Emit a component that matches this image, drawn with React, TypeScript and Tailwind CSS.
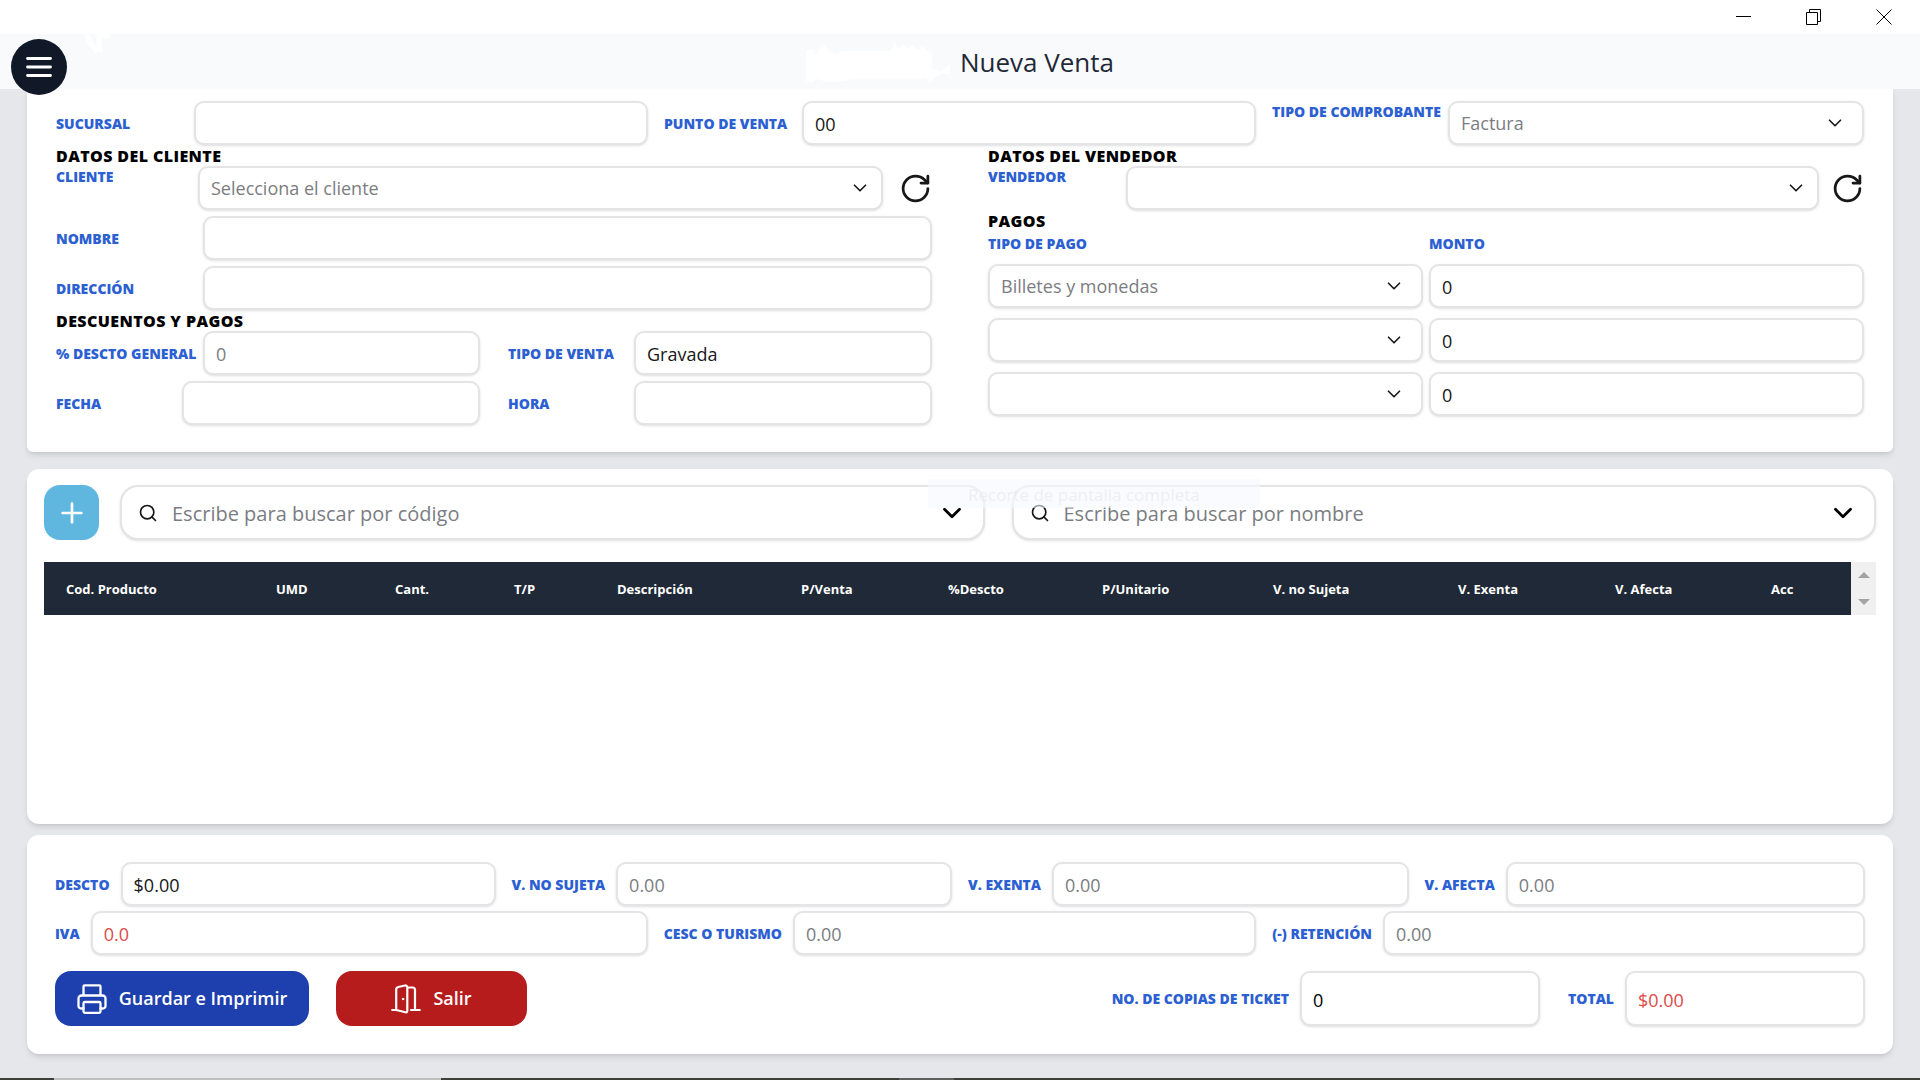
import clsx from 'clsx';
import { ChevronDown, Plus, RotateCw, Search } from 'lucide-react';
import React, { useState } from 'react';

type FieldProps = {
    id: string;
    label: string;
    labelClass?: string;
    textClass?: string;
    defaultValue?: string;
    placeholder?: string;
};

const control = 'w-full min-w-0 rounded-[10px] border-2 border-[#e4e4e7] bg-white px-[11px] text-[18px] shadow-sm outline-none placeholder:text-[#7b7d82] focus:border-blue-400';
const labelText = 'shrink-0 text-[14px] leading-[21px] font-extrabold text-[#2c5fd2]';

const Field: React.FC<FieldProps> = ({ id, label, labelClass, textClass = 'text-neutral-900', defaultValue, placeholder }) => (
    <div className="flex items-center">
        <label htmlFor={id} className={clsx(labelText, labelClass)}>{label}</label>
        <input id={id} defaultValue={defaultValue} placeholder={placeholder} className={clsx(control, 'h-11 pt-0.5', textClass)} />
    </div>
);

type PickerProps = {
    id: string;
    value?: string;
    arrowClass?: string;
    ariaLabel?: string;
};

const Picker: React.FC<PickerProps> = ({ id, value = '', arrowClass = 'right-[18px]', ariaLabel }) => (
    <div className="relative min-w-0 flex-1">
        <select id={id} aria-label={ariaLabel} className={clsx(control, 'h-11 appearance-none text-[#7b7d82]')}>
            <option>{value}</option>
        </select>
        <ChevronDown strokeWidth={1.8} className={clsx('pointer-events-none absolute top-[11px] size-[22px] text-neutral-900', arrowClass)} />
    </div>
);

const SectionTitle: React.FC<{ children: React.ReactNode }> = ({ children }) => (
    <h2 className="h-[21px] text-[16px] leading-[22px] font-extrabold tracking-wide text-black">{children}</h2>
);

const ReloadButton: React.FC<{ title: string }> = ({ title }) => (
    <button type="button" aria-label={title} className="shrink-0">
        <RotateCw className="size-[33px] text-neutral-900" />
    </button>
);

const SearchBox: React.FC<{ label: string }> = ({ label }) => (
    <div className="flex h-[55px] min-w-0 flex-1 items-center rounded-[18px] border-2 border-[#e4e4e7] bg-white px-4 shadow-sm">
        <Search className="size-5 shrink-0 text-neutral-900" />
        <input aria-label={label} placeholder={label} className="ml-3.5 min-w-0 flex-1 pt-0.5 text-[20px] outline-none placeholder:text-[#7b7d82]" />
        <button type="button" aria-label="Mostrar opciones">
            <ChevronDown className="size-[30px] text-black" strokeWidth={2.2} />
        </button>
    </div>
);

const WindowBar = () => (
    <div className="flex h-[34px] items-center justify-end gap-[54px] bg-white pr-[28px]">
        <button type="button" aria-label="Minimizar">
            <svg className="size-4" viewBox="0 0 16 16" stroke="#000" fill="none"><path d="M0 7.5h15" /></svg>
        </button>
        <button type="button" aria-label="Restaurar">
            <svg className="size-4" viewBox="0 0 16 16" stroke="#000" fill="none"><path d="M.5 3.5h11v12H.5zM3.5 3.500v-3h11v12h-3" /></svg>
        </button>
        <button type="button" aria-label="Cerrar">
            <svg className="size-4" viewBox="0 0 16 16" stroke="#000" fill="none"><path d="M.5.5l15 15M15.500.5l-15 15" /></svg>
        </button>
    </div>
);

const Header = () => (
    <header className="relative flex h-[55px] items-center justify-center bg-[#f9fafc]">
        <button type="button" aria-label="Menú" className="absolute top-[5px] left-[11px] z-10 flex size-14 items-center justify-center rounded-full bg-[#111827]">
            <svg className="h-[22px] w-7" viewBox="0 0 28 22" stroke="#fff" strokeWidth="2.8" strokeLinecap="round"><path d="M2.500 2.500h23M2.500 11h23M2.500 19.500h23" /></svg>
        </button>
        <svg className="absolute top-0 left-[82px] h-5 w-7" viewBox="0 0 28 20" fill="none" stroke="#fff" strokeWidth="5"><path d="M4 0l5 10 7 8M19 18l-2-9V2h12" /></svg>
        <svg className="h-10 w-[150px]" viewBox="0 0 150 40" fill="#fff">
            <path d="M0 8l6-1 3 6 4-5 6-5 3 6 8 3 6-3h48l5-7 4 4 5-4 3 5 6-4 4 5 6-4 4 5 5 1v16l8 4 6-5 4-3v11l-6-2-6 3-8 6-4-5-6 2H50l-22 3-5 7-5-8-7-2-5 4-6-2z" />
        </svg>
        <h1 className="ml-1 text-[26px] leading-8 font-medium text-[#1f2937]">Nueva Venta</h1>
    </header>
);

const pagos = ['Billetes y monedas', '', ''];

const DatosVenta = () => (
    <section className="rounded-b-md bg-white px-[29px] pt-3 pb-[27px] shadow-md">
        <div className="grid grid-cols-3 gap-4">
            <Field id="sucursal" label="SUCURSAL" labelClass="w-[138px]" />
            <Field id="punto" label="PUNTO DE VENTA" labelClass="w-[138px]" defaultValue="00" />
            <div className="flex items-start">
                <label htmlFor="comprobante" className={clsx(labelText, 'w-[176px]')}>TIPO DE COMPROBANTE</label>
                <Picker id="comprobante" value="Factura" />
            </div>
        </div>

        <div className="grid grid-cols-2 gap-14">
            <div>
                <SectionTitle>DATOS DEL CLIENTE</SectionTitle>
                <div className="flex flex-col gap-1.5">
                    <div className="flex items-start">
                        <label htmlFor="cliente" className={clsx(labelText, 'w-[142px]')}>CLIENTE</label>
                        <Picker id="cliente" value="Selecciona el cliente" arrowClass="right-[12px]" />
                        <div className="flex h-11 items-center pl-4"><ReloadButton title="Recargar clientes" /></div>
                    </div>
                    <Field id="nombre" label="NOMBRE" labelClass="w-[147px]" />
                    <Field id="direccion" label="DIRECCIÓN" labelClass="w-[147px]" />
                </div>
                <SectionTitle>DESCUENTOS Y PAGOS</SectionTitle>
                <div className="grid grid-cols-2 gap-x-7 gap-y-1.5">
                    <Field id="descto-general" label="% DESCTO GENERAL" labelClass="w-[147px]" placeholder="0" />
                    <Field id="tipo-venta" label="TIPO DE VENTA" labelClass="w-[126px]" defaultValue="Gravada" />
                    <Field id="fecha" label="FECHA" labelClass="w-[126px]" />
                    <Field id="hora" label="HORA" labelClass="w-[126px]" />
                </div>
            </div>

            <div>
                <SectionTitle>DATOS DEL VENDEDOR</SectionTitle>
                <div className="flex items-start">
                    <label htmlFor="vendedor" className={clsx(labelText, 'w-[138px]')}>VENDEDOR</label>
                    <Picker id="vendedor" arrowClass="right-[12px]" />
                    <div className="flex h-11 items-center pl-3"><ReloadButton title="Recargar vendedores" /></div>
                </div>
                <SectionTitle>PAGOS</SectionTitle>
                <div className="grid grid-cols-2 gap-x-1.5 gap-y-2.5">
                    <label htmlFor="pago-0" className={clsx(labelText, 'pt-0.5')}>TIPO DE PAGO</label>
                    <label htmlFor="monto-0" className={clsx(labelText, 'pt-0.5')}>MONTO</label>
                    {pagos.map((p, i) => (
                        <React.Fragment key={i}>
                            <Picker id={`pago-${i}`} value={p} ariaLabel={`Tipo de pago ${i + 1}`} />
                            <input id={`monto-${i}`} aria-label={`Monto ${i + 1}`} defaultValue="0" className={clsx(control, 'h-11 pt-0.5 text-neutral-900')} />
                        </React.Fragment>
                    ))}
                </div>
            </div>
        </div>
    </section>
);

const columnas = [
    { titulo: 'Cod. Producto', ancho: 'w-[210px]' },
    { titulo: 'UMD', ancho: 'w-[119px]' },
    { titulo: 'Cant.', ancho: 'w-[119px]' },
    { titulo: 'T/P', ancho: 'w-[103px]' },
    { titulo: 'Descripción', ancho: 'w-[184px]' },
    { titulo: 'P/Venta', ancho: 'w-[147px]' },
    { titulo: '%Descto', ancho: 'w-[154px]' },
    { titulo: 'P/Unitario', ancho: 'w-[171px]' },
    { titulo: 'V. no Sujeta', ancho: 'w-[185px]' },
    { titulo: 'V. Exenta', ancho: 'w-[157px]' },
    { titulo: 'V. Afecta', ancho: 'w-[156px]' },
    { titulo: 'Acc', ancho: 'w-[102px]' },
];

const Productos = () => (
    <section className="relative flex-1 rounded-xl bg-white px-[17px] pt-4 pb-4 shadow-md">
        <div className="flex items-center">
            <button type="button" aria-label="Agregar producto" className="mr-[21px] flex size-[55px] shrink-0 items-center justify-center rounded-[16px] bg-[#5fb7e0] text-white">
                <Plus className="size-8" />
            </button>
            <div className="flex min-w-0 flex-1 gap-[27px]">
                <SearchBox label="Escribe para buscar por código" />
                <SearchBox label="Escribe para buscar por nombre" />
            </div>
        </div>
        {/* Aviso que se desvanece */}
        <div className="pointer-events-none absolute top-2.5 left-[901px] h-[29px] w-[332px] bg-[#f7f9fd]/60 pl-10 text-[17px] leading-8 text-[#e9eaee]/70">
            Recorte de pantalla completa
        </div>
        <div className="mt-[22px] flex">
            <table className="w-full table-fixed bg-[#1f2937] text-white">
                <thead>
                    <tr className="h-[53px]">
                        {columnas.map((c) => (
                            <th key={c.titulo} className={clsx('pt-0.5 pl-[22px] text-left text-[13px] font-bold whitespace-nowrap', c.ancho)}>{c.titulo}</th>
                        ))}
                    </tr>
                </thead>
            </table>
            <div className="flex w-[25px] shrink-0 flex-col items-center justify-between bg-[#f0f0f0] py-[10px]">
                <svg className="h-1.5 w-3" viewBox="0 0 12 6" fill="#a3a3a3"><path d="M0 6l6-6 6 6z" /></svg>
                <svg className="h-1.5 w-3" viewBox="0 0 12 6" fill="#a3a3a3"><path d="M0 0l6 6 6-6z" /></svg>
            </div>
        </div>
    </section>
);

const Totales = () => {
    const [copias, setCopias] = useState('0');

    return (
        <section className="rounded-xl bg-white px-7 pt-[27px] pb-7 shadow-md">
            <div className="grid grid-cols-4 gap-4">
                <Field id="descto" label="DESCTO" labelClass="pr-[11px]" defaultValue="$0.00" />
                <Field id="no-sujeta" label="V. NO SUJETA" labelClass="pr-[11px]" placeholder="0.00" />
                <Field id="exenta" label="V. EXENTA" labelClass="pr-[11px]" placeholder="0.00" />
                <Field id="afecta" label="V. AFECTA" labelClass="pr-[11px]" placeholder="0.00" />
            </div>
            <div className="mt-[5px] grid grid-cols-3 gap-4">
                <Field id="iva" label="IVA" labelClass="pr-[11px]" textClass="font-medium text-[#dc4a4a]" defaultValue="0.0" />
                <Field id="cesc" label="CESC O TURISMO" labelClass="pr-[11px]" placeholder="0.00" />
                <Field id="retencion" label="(-) RETENCIÓN" labelClass="pr-[11px]" placeholder="0.00" />
            </div>
            <div className="mt-4 flex items-center justify-between text-[18px]">
                <div className="flex gap-[27px] font-semibold text-white">
                    <button type="button" className="flex h-[55px] w-[254px] items-center justify-center gap-3 rounded-[16px] bg-[#1e3fae]">
                        <svg className="size-[30px]" viewBox="0 0 30 30" fill="none" stroke="currentColor" strokeWidth="2.3" strokeLinecap="round" strokeLinejoin="round">
                            <path d="M6.500 24.500H4a2.500 2.500 0 0 1-2.500-2.500v-7.500A3 3 0 0 1 4.500 11.500h21a3 3 0 0 1 3 3V22a2.500 2.500 0 0 1-2.500 2.500h-2.500M6.500 11.500v-9a1.200 1.200 0 0 1 1.200-1.200h14.600a1.200 1.200 0 0 1 1.200 1.200v9" />
                            <rect x="6.500" y="18" width="17" height="10.800" rx="1.300" />
                        </svg>
                        Guardar e Imprimir
                    </button>
                    <button type="button" className="flex h-[55px] w-[191px] items-center justify-center gap-3 rounded-[16px] bg-[#b71c1c]">
                        <svg className="size-[30px]" viewBox="0 0 30 30" fill="none" stroke="currentColor" strokeWidth="2.2" strokeLinecap="round" strokeLinejoin="round">
                            <path d="M1.200 26h4V5.500A2.500 2.500 0 0 1 7.300 3l6.500-1.500A2 2 0 0 1 16.300 3.400v23.400a1.500 1.500 0 0 1-1.900 1.500L5.200 26M16.300 3.500h5.200A2.500 2.500 0 0 1 24 6v20M20 26h8.800" />
                            <circle cx="12" cy="15" r=".8" fill="currentColor" strokeWidth="1" />
                        </svg>
                        Salir
                    </button>
                </div>
                <div className="flex items-center">
                    <label htmlFor="copias" className={clsx(labelText, 'pr-[11px]')}>NO. DE COPIAS DE TICKET</label>
                    <div className="w-60">
                        <input id="copias" value={copias} onChange={(e) => setCopias(e.target.value)} className={clsx(control, 'h-[55px] pt-0.5 font-medium text-black')} />
                    </div>
                    <label htmlFor="total" className={clsx(labelText, 'pr-[11px] pl-7')}>TOTAL</label>
                    <div className="w-60">
                        <input id="total" defaultValue="$0.00" className={clsx(control, 'h-[55px] pt-0.5 font-medium text-[#dc4a4a]')} />
                    </div>
                </div>
            </div>
        </section>
    );
};

const App: React.FC = () => (
    <div className="flex min-h-screen flex-col bg-[#e5e7eb] font-['Open_Sans','Noto_Sans',sans-serif]">
        <WindowBar />
        <Header />
        <main className="flex flex-1 flex-col px-[27px] pb-6">
            <DatosVenta />
            <div className="flex flex-1 flex-col gap-[11px] pt-[17px]">
                <Productos />
                <Totales />
            </div>
        </main>
        {/* Borde superior de la barra de tareas */}
        <div className="flex h-0.5 bg-[#3f403c]">
            <div className="ml-[54px] h-0.5 w-[387px] bg-[#bfbfbf]" />
            <div className="ml-[458px] h-0.5 w-[55px] bg-[#5f605d]" />
        </div>
    </div>
);

export default App;
